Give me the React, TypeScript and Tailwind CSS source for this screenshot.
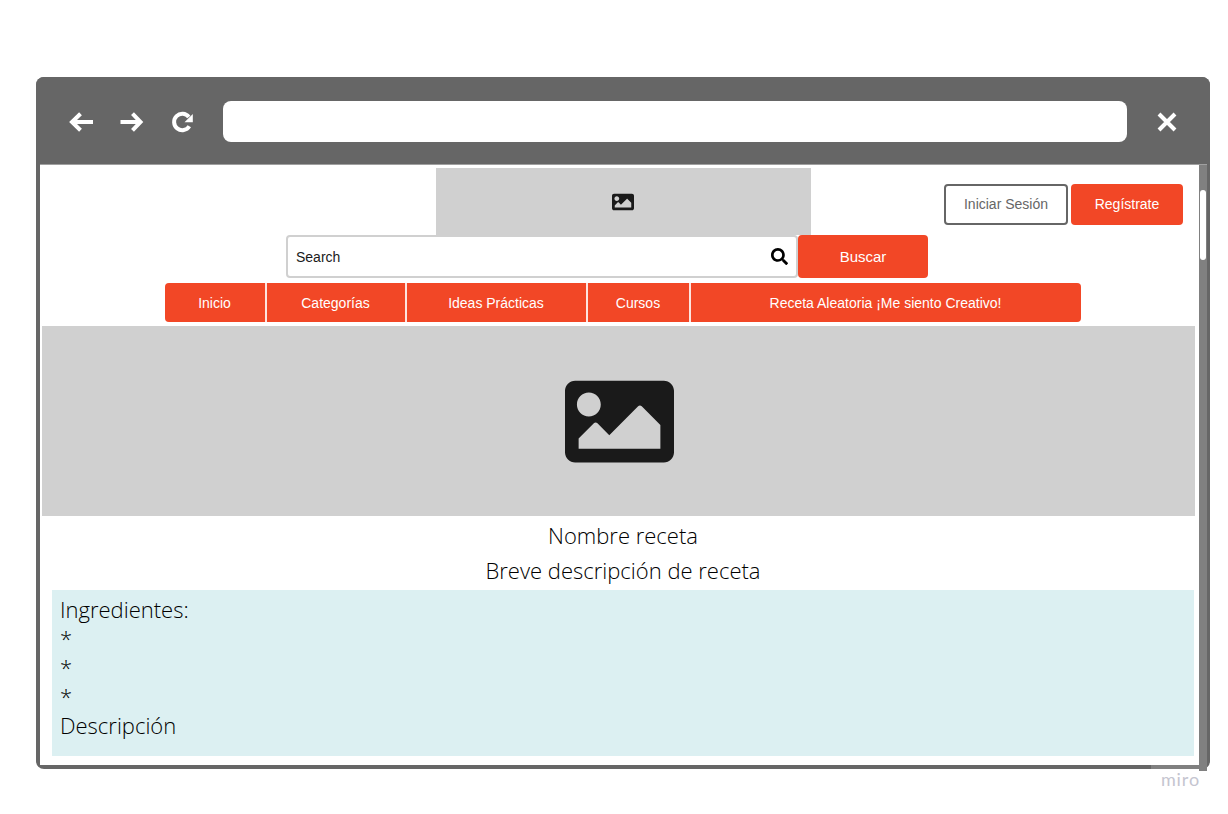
import { FaImage, FaSearch } from "react-icons/fa";

const navItems = [
  { label: "Inicio", width: "w-[100px]" },
  { label: "Categorías", width: "w-[138px]" },
  { label: "Ideas Prácticas", width: "w-[179px]" },
  { label: "Cursos", width: "w-[101px]" },
  { label: "Receta Aleatoria ¡Me siento Creativo!", width: "w-[390px]" },
];

function BrowserBar() {
  return (
    <div className="flex h-[87px] items-center bg-[#666666] pt-0.5 pr-[33px] pl-[33px] text-white">
      <div className="flex items-center gap-[27px]">
        <button type="button" aria-label="Atrás">
          <svg width="24" height="20" viewBox="0 0 24 20" fill="none" stroke="currentColor" strokeWidth="4">
            <path d="M24 10H3.500M11.500 1.700L3 10l8.500 8.300" />
          </svg>
        </button>
        <button type="button" aria-label="Adelante">
          <svg width="24" height="20" viewBox="0 0 24 20" fill="none" stroke="currentColor" strokeWidth="4">
            <path d="M0.500 10H20M12.500 1.700L20.500 10l-8 8.300" />
          </svg>
        </button>
        <button type="button" aria-label="Recargar">
          <svg width="24" height="22" viewBox="0 0 24 22">
            <path d="M18.300 15.300A8.200 8.200 0 1 1 17.800 6" fill="none" stroke="currentColor" strokeWidth="4" />
            <path d="M21.800 3V11.300H13.500z" fill="currentColor" />
          </svg>
        </button>
      </div>
      <input
        type="text"
        aria-label="Dirección"
        className="mr-[30px] ml-7 h-[41px] min-w-0 flex-1 rounded-lg bg-white px-3 text-black outline-none"
      />
      <button type="button" aria-label="Cerrar">
        <svg width="20" height="20" viewBox="0 0 20 20" fill="none" stroke="currentColor" strokeWidth="4">
          <path d="M2 2l16 16M18 2L2 18" />
        </svg>
      </button>
    </div>
  );
}

export default function App() {
  return (
    <div className="bg-white pt-[77px] pr-[18px] pl-9 font-['Liberation_Sans',sans-serif] text-sm">
      <div className="relative rounded-lg bg-[#666666]">
        <div className="overflow-hidden rounded-t-lg">
          <BrowserBar />
        </div>
        <div className="flex pr-[3px] pb-1 pl-1">
          <main className="min-w-0 flex-1 border-t border-[#a0a0a0] bg-white pt-[3px] pb-[9px]">
            <header>
              <div className="grid grid-cols-[1fr_375px_1fr] pl-[7px]">
                <div />
                <div className="flex h-[67px] items-center justify-center bg-[#d0d0d0] text-[#1a1a1a]">
                  <FaImage size={22} />
                </div>
                <div className="flex items-center justify-end gap-[3px] pt-[5px] pr-4">
                  <button
                    type="button"
                    className="h-[41px] w-[124px] rounded border-2 border-[#666666] bg-white text-[#666666]"
                  >
                    Iniciar Sesión
                  </button>
                  <button type="button" className="h-[41px] w-28 rounded bg-[#f24726] text-white">
                    Regístrate
                  </button>
                </div>
              </div>
              <form className="flex justify-center pr-[25px]" onSubmit={(e) => e.preventDefault()}>
                <label className="flex h-[43px] w-[512px] items-center rounded border-2 border-[#d0d0d0] bg-white pr-2 pl-2">
                  <input
                    type="text"
                    aria-label="Buscar receta"
                    placeholder="Search"
                    className="min-w-0 flex-1 text-[#1a1a1a] outline-none placeholder:text-[#1a1a1a]"
                  />
                  <FaSearch size={17} className="text-black" />
                </label>
                <button type="submit" className="h-[43px] w-[130px] rounded bg-[#f24726] text-[15px] text-white">
                  Buscar
                </button>
              </form>
              <nav className="mt-[5px] flex justify-center pl-1.5">
                <div className="flex h-[39px] gap-0.5 overflow-hidden rounded bg-[#fde4df]">
                  {navItems.map((item) => (
                    <a
                      key={item.label}
                      href="#"
                      className={`flex items-center justify-center bg-[#f24726] text-white ${item.width}`}
                    >
                      {item.label}
                    </a>
                  ))}
                </div>
              </nav>
            </header>
            <div className="mt-1 mr-1 ml-0.5 flex h-[190px] items-center justify-center bg-[#d0d0d0] pl-0.5 text-[#1a1a1a]">
              <FaImage size={109} />
            </div>
            <div className="pt-0.5 pl-[7px] text-center font-['Open_Sans',sans-serif] text-[22px] leading-[35px] font-light text-black">
              <h1>Nombre receta</h1>
              <p>Breve descripción de receta</p>
            </div>
            <section className="mt-0.5 mr-[5px] ml-3 h-[166px] bg-[#dcf0f2] px-2 pt-[5px] font-['Open_Sans',sans-serif] text-[22px] leading-[29px] font-light text-black">
              <h2>Ingredientes:</h2>
              <p>*</p>
              <p>*</p>
              <p>*</p>
              <h2>Descripción</h2>
            </section>
          </main>
          <div className="w-2 border-t border-[#a0a0a0] bg-[#808080] pt-[25px]">
            <div className="mx-auto h-[70px] w-1.5 rounded-full bg-white" />
          </div>
        </div>
        <div className="absolute right-[3px] bottom-0 h-1 w-14 bg-[#808080]" />
        <div className="absolute right-[3px] -bottom-0.5 h-1.5 w-2 bg-[#808080]" />
      </div>
      <div className="flex justify-end pr-2.5 font-[Lato,sans-serif] text-lg leading-5 tracking-wider text-[#c5c5d0]">miro</div>
    </div>
  );
}
